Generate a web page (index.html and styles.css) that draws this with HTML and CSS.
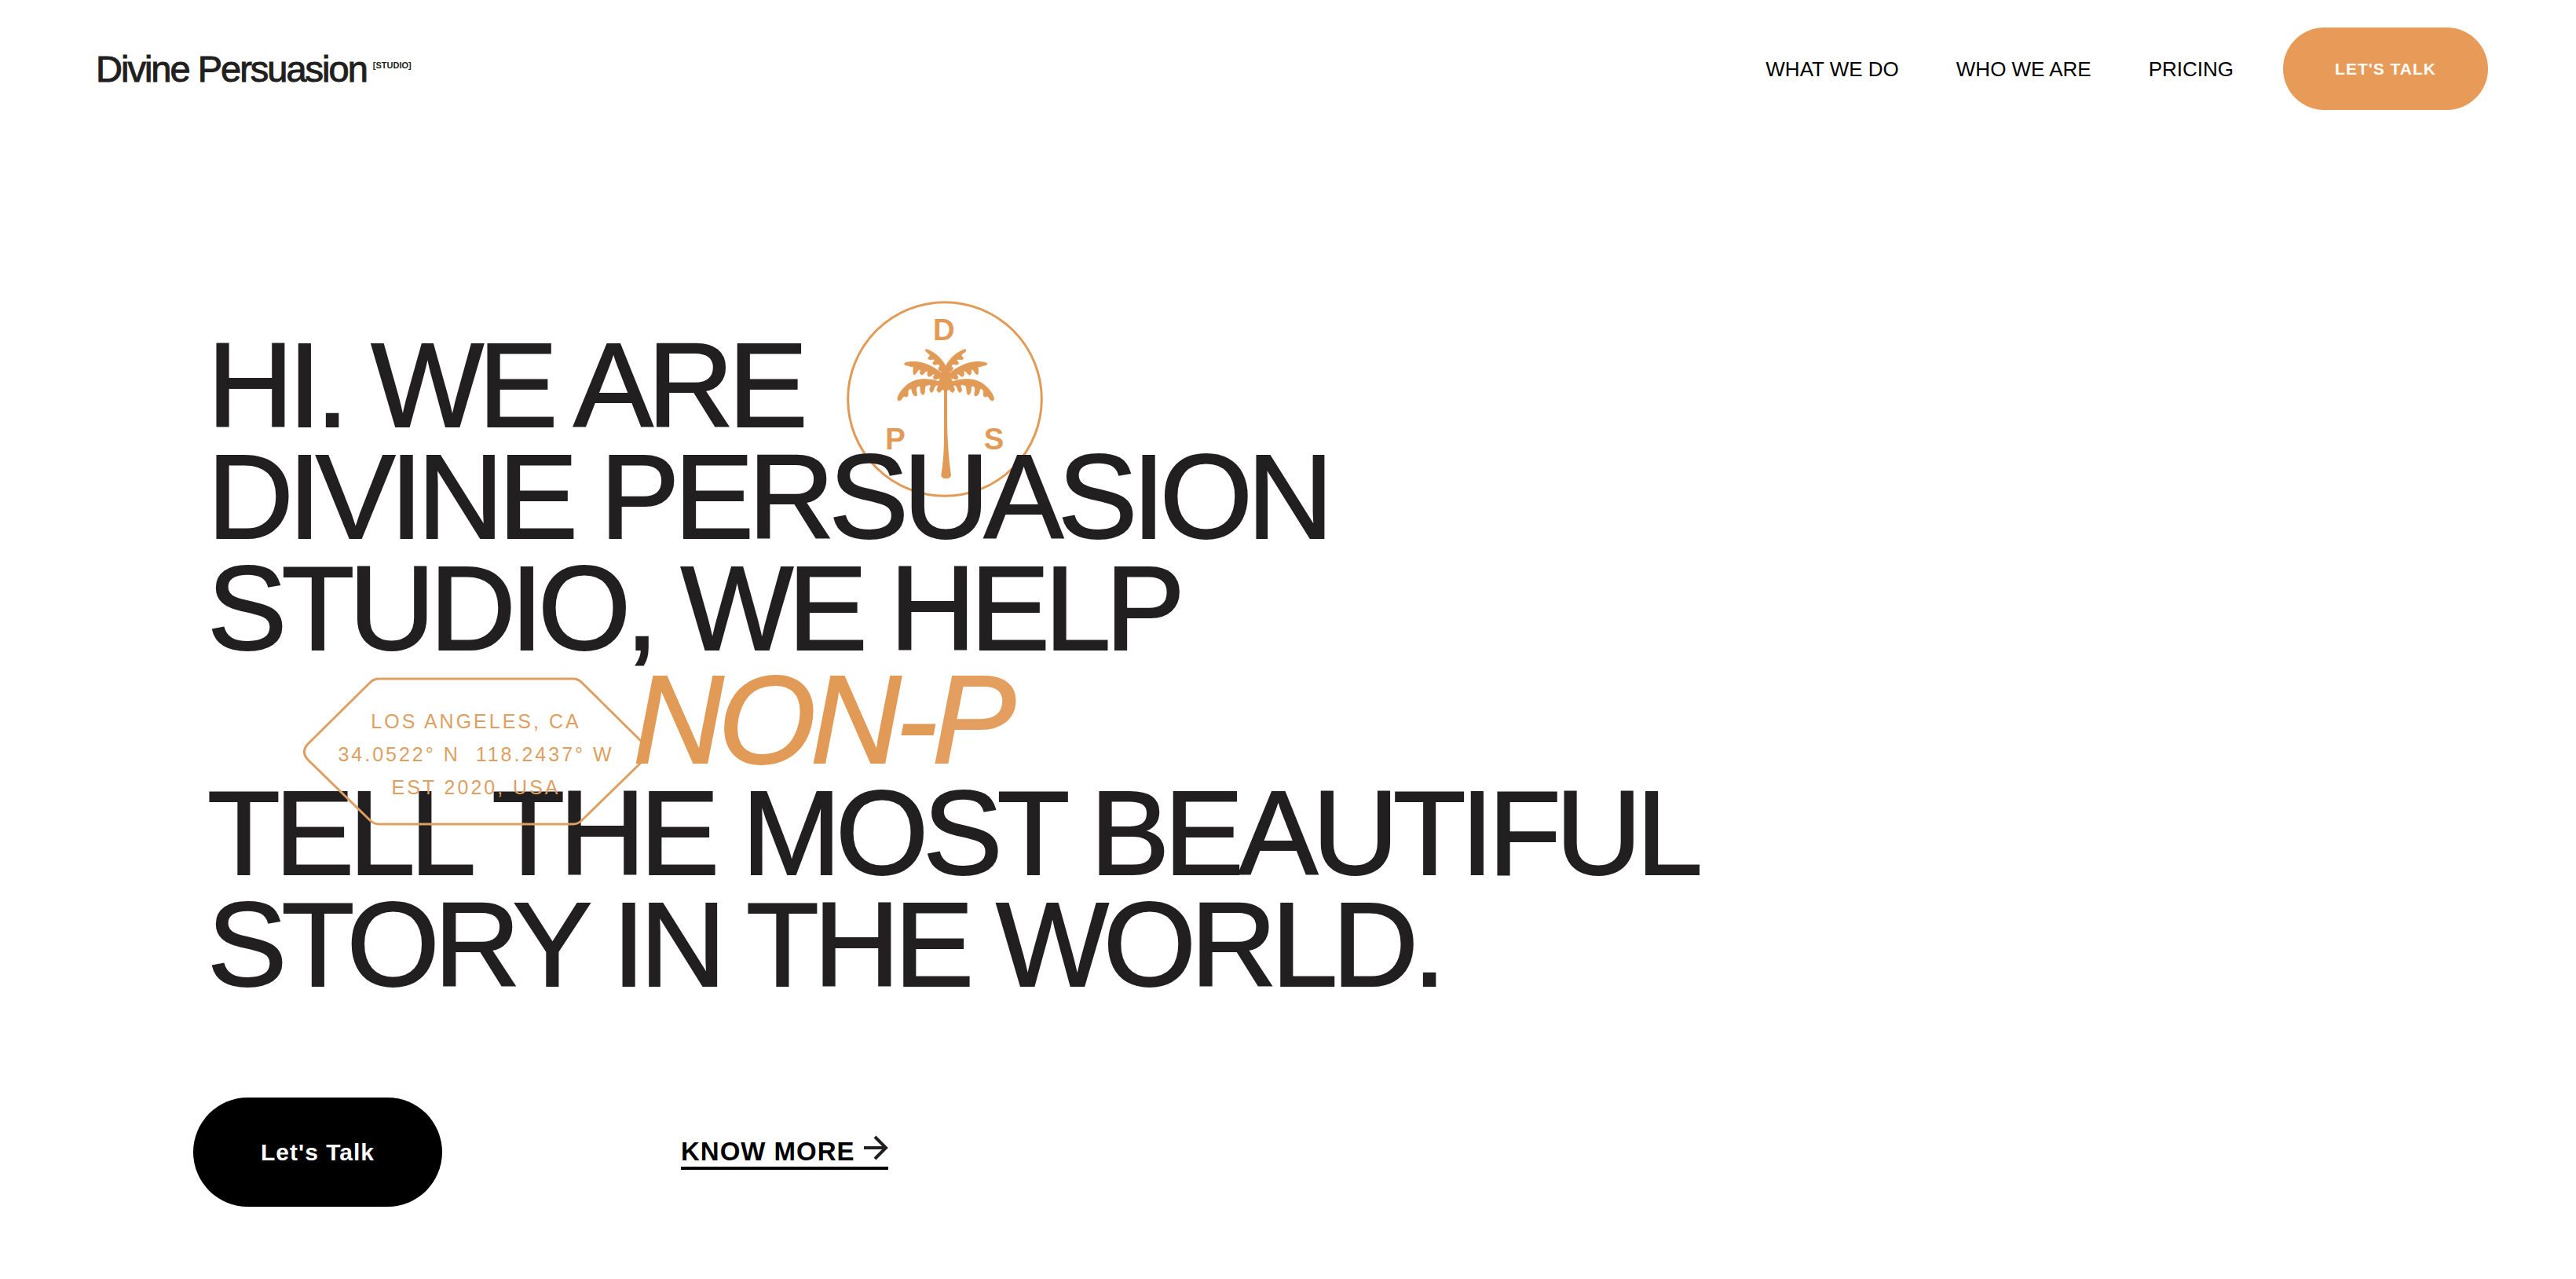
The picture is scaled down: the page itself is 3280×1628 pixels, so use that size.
FILE: index.html
```html
<!DOCTYPE html>
<html lang="en">
<head>
<meta charset="utf-8">
<meta name="viewport" content="width=device-width, initial-scale=1">
<title>Divine Persuasion Studio</title>
<link rel="stylesheet" href="styles.css">
</head>
<body>
<header class="site-header">
  <a class="brand" href="#"><span class="brand-name">Divine Persuasion</span><span class="brand-tag">[STUDIO]</span></a>
  <nav class="site-nav">
    <a class="nav-link" href="#what">WHAT WE DO</a>
    <a class="nav-link" href="#who">WHO WE ARE</a>
    <a class="nav-link" href="#pricing">PRICING</a>
    <button class="btn btn-small" type="button">LET'S TALK</button>
  </nav>
</header>
<main class="hero">
  <h1 class="headline">
    <span class="line line-intro">HI. WE ARE
      <svg class="seal" viewBox="54 68 750 750" aria-hidden="true">
        <circle cx="429" cy="443" r="370" fill="none" stroke="currentColor" stroke-width="9"/>
        <g fill="currentColor">
          <text x="384" y="219" class="seal-letter">D</text>
          <text x="202" y="634" class="seal-letter">P</text>
          <text x="578" y="634" class="seal-letter">S</text>
          <path d="M426 400H438C438 500 438 560 441 610Q445 680 453 733Q452 746 434 747Q416 746 415 733Q424 680 426 610Z"/>
          <path d="M432 322L452 346L448 360L462 378L458 400L440 410H425L406 400L402 378L416 360L412 346Z"/>
          <path id="frond" stroke="currentColor" stroke-width="3" stroke-linejoin="round" d="M433 320C420 290 392 264 359 253C353 253 355 263 366 268C374 274 374 278 370 281C362 287 365 292 376 292C388 289 392 292 388 299C380 306 384 313 395 311C404 308 414 312 410 319C400 326 406 334 420 340L426 352C392 322 340 290 280 304C271 307 274 315 286 314C294 314 298 322 305 318C312 318 308 332 309 345C311 353 318 348 323 338C328 329 338 328 336 337C332 350 342 355 350 344C356 334 366 332 364 342C360 356 370 361 378 352C385 344 394 346 388 354C382 364 390 371 399 366C408 360 416 368 428 376L430 386C380 362 330 362 298 380C268 398 248 428 249 444C251 452 260 450 266 440C270 430 276 433 282 434C290 434 288 424 288 414C290 404 300 400 303 406C304 420 310 431 320 431C326 427 318 412 320 402C324 392 334 388 336 400C336 414 338 425 346 426C354 424 350 408 354 396C360 386 378 386 376 394C370 404 370 416 379 417C386 415 386 404 390 396C398 386 408 388 402 398C396 408 400 416 408 417C416 414 414 406 422 404L433 408Z"/>
          <use href="#frond" transform="translate(865 0) scale(-1 1)"/>
        </g>
      </svg>
    </span>
    <span class="line">DIVINE PERSUASION</span>
    <span class="line">STUDIO, WE HELP</span>
    <span class="line line-accent">
      <svg class="badge" viewBox="0 0 444 194" aria-hidden="true">
        <path d="M98 4H346Q352 4 357 9L436 87Q445 97 436 107L357 184Q352 189 346 189H98Q92 189 87 184L8 107Q-1 97 8 87L87 9Q92 4 98 4Z" fill="none" stroke="currentColor" stroke-width="3"/>
        <g class="badge-text" fill="currentColor">
          <text x="222" y="67">LOS ANGELES, CA</text>
          <text x="222" y="109" xml:space="preserve">34.0522° N  118.2437° W</text>
          <text x="222" y="151">EST 2020, USA</text>
        </g>
      </svg>
      <em class="typed">NON-<span class="typing">P</span></em>
    </span>
    <span class="line">TELL THE MOST BEAUTIFUL</span>
    <span class="line">STORY IN THE WORLD.</span>
  </h1>
  <div class="actions">
    <button class="btn btn-large" type="button">Let's Talk</button>
    <a class="more" href="#more">KNOW MORE
      <svg class="arrow" viewBox="0 0 32 32" aria-hidden="true"><path d="M1 16H29M15 2L29 16L15 30" fill="none" stroke="currentColor" stroke-width="4"/></svg>
    </a>
  </div>
</main>
</body>
</html>
```
FILE: styles.css
```css
:root {
  --ink: #221f20;
  --accent: #e29a57;
}

* {
  box-sizing: border-box;
}

body {
  margin: 0;
  background: #fff;
  color: var(--ink);
  font-family: "Liberation Sans", Arial, Helvetica, sans-serif;
}

a {
  color: inherit;
  text-decoration: none;
}

.site-header {
  display: flex;
  align-items: center;
  justify-content: space-between;
  padding: 35px 112px 0 122px;
}

.brand {
  display: flex;
  align-items: flex-start;
  gap: 8px;
}

.brand-name {
  font-size: 47px;
  line-height: 56px;
  letter-spacing: -2px;
  -webkit-text-stroke: 1px currentColor;
}

.brand-tag {
  padding-top: 16px;
  font-size: 11px;
  line-height: 14px;
  font-weight: 700;
}

.site-nav {
  display: flex;
  align-items: center;
  gap: 73px;
}

.nav-link {
  color: #000;
  font-size: 26px;
  line-height: 32px;
}

.btn {
  border: 0;
  color: #fff;
  font-family: inherit;
  font-weight: 700;
  cursor: pointer;
}

.btn-small {
  height: 105px;
  margin-left: -10px;
  padding: 0 66px;
  border-radius: 53px;
  background: #e89b58;
  font-size: 21px;
  letter-spacing: 1px;
}

.btn-large {
  height: 139px;
  padding: 0 86px;
  border-radius: 70px;
  background: #000;
  font-size: 30px;
  letter-spacing: 1px;
}

.hero {
  padding: 279px 246px 92px;
}

.headline {
  position: relative;
  isolation: isolate;
  margin: 0;
  padding-left: 18px;
  font-size: 152px;
  line-height: 142px;
  font-weight: 400;
  letter-spacing: -7px;
  -webkit-text-stroke: 2px currentColor;
}

.line {
  display: block;
  white-space: nowrap;
}

.seal,
.badge {
  -webkit-text-stroke: 0;
}

.seal {
  position: absolute;
  left: 832px;
  top: -36px;
  z-index: -1;
  width: 250px;
  height: 250px;
  color: var(--accent);
}

.seal-letter {
  font-size: 115px;
  font-weight: 700;
  letter-spacing: 0;
}

.line-accent {
  padding-left: 542px;
  color: var(--accent);
}

.badge {
  position: absolute;
  left: 138px;
  top: 441px;
  z-index: 1;
  width: 444px;
  height: 194px;
  color: #dd9f62;
}

.badge-text {
  font-size: 25px;
  letter-spacing: 3px;
  text-anchor: middle;
}

.typed {
  position: relative;
  z-index: 2;
  font-size: 160px;
}

.typing {
  color: #e39e60;
}

.actions {
  display: flex;
  align-items: center;
  gap: 304px;
  margin-top: 124px;
}

.more {
  display: flex;
  align-items: baseline;
  gap: 10px;
  border-bottom: 4px solid #000;
  color: #000;
  font-size: 33px;
  line-height: 38px;
  font-weight: 700;
  letter-spacing: 1px;
}

.arrow {
  width: 32px;
  height: 32px;
  color: var(--ink);
}
```
